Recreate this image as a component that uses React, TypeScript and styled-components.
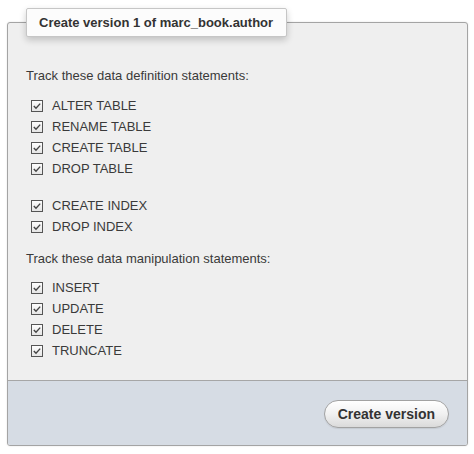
import React from 'react'
import styled, { createGlobalStyle } from 'styled-components'

const GlobalStyle = createGlobalStyle`
  html, body {
    margin: 0;
    padding: 0;
    background: #ffffff;
  }
  body {
    font-family: "Liberation Sans", Arial, sans-serif;
    font-size: 13px;
    color: #333;
  }
`

const Page = styled.div`
  width: 474px;
  height: 454px;
  padding: 8px 6px 0 7px;
  box-sizing: border-box;
`

const Panel = styled.fieldset`
  margin: 0;
  padding: 0;
  min-width: 0;
  border: 1px solid #a4a4a4;
  border-radius: 3px;
  background: #efefef;
  box-shadow: 0 0 2px rgba(0, 0, 0, 0.12);
`

const Legend = styled.legend`
  margin-left: 18px;
  padding: 6px 13px 6px 12px;
  line-height: 15px;
  font-weight: bold;
  font-size: 13px;
  color: #333;
  background: #fcfcfc;
  border: 1px solid #c6c6c6;
  border-radius: 2px;
  box-shadow: 0 3px 7px rgba(0, 0, 0, 0.2);
`

const Body = styled.div`
  padding: 31px 18px 19px;
`

const Heading = styled.div<{ $gap?: number }>`
  line-height: 15px;
  margin-top: ${({ $gap }) => $gap ?? 0}px;
  color: #3a3a3a;
`

const Group = styled.ul<{ $gap: number }>`
  list-style: none;
  margin: ${({ $gap }) => $gap}px 0 0;
  padding: 0 0 0 5px;
`

const Row = styled.li`
  display: flex;
  align-items: center;
  gap: 9px;
  height: 21px;
  line-height: 21px;
  color: #3a3a3a;
`

const Box = styled.span`
  display: inline-flex;
  align-items: center;
  justify-content: center;
  width: 12px;
  height: 12px;
  box-sizing: border-box;
  border: 1px solid #555;
  background: linear-gradient(#fdfdfd, #e6e6e6);
`

const Footer = styled.div`
  display: flex;
  justify-content: flex-end;
  padding: 19px 18px 17px;
  background: #d6dce4;
  border-top: 1px solid #a6a6a6;
  border-radius: 0 0 2px 2px;
`

const Button = styled.button`
  height: 28px;
  padding: 0 13px;
  border: 1px solid #a2a2a2;
  border-radius: 14px;
  background: linear-gradient(#ffffff 0%, #f1f1f1 50%, #dadada 100%);
  font-family: "Liberation Sans", Arial, sans-serif;
  font-size: 14px;
  font-weight: bold;
  color: #333;
  cursor: pointer;
  box-shadow: 0 1px 1px rgba(0, 0, 0, 0.08);
`

const Check = () => (
  <Box>
    <svg width="10" height="10" viewBox="0 0 10 10">
      <path d="M1.8 5 L4 7.3 L8.2 2.6" fill="none" stroke="#444" strokeWidth="1.4" />
    </svg>
  </Box>
)

const Option = ({ label }: { label: string }) => (
  <Row>
    <Check />
    <span>{label}</span>
  </Row>
)

const App = () => (
  <Page>
    <GlobalStyle />
    <Panel>
      <Legend>Create version 1 of marc_book.author</Legend>
      <Body>
        <Heading>Track these data definition statements:</Heading>
        <Group $gap={12}>
          {['ALTER TABLE', 'RENAME TABLE', 'CREATE TABLE', 'DROP TABLE'].map(l => (
            <Option key={l} label={l} />
          ))}
        </Group>
        <Group $gap={16}>
          {['CREATE INDEX', 'DROP INDEX'].map(l => (
            <Option key={l} label={l} />
          ))}
        </Group>
        <Heading $gap={14}>Track these data manipulation statements:</Heading>
        <Group $gap={11}>
          {['INSERT', 'UPDATE', 'DELETE', 'TRUNCATE'].map(l => (
            <Option key={l} label={l} />
          ))}
        </Group>
      </Body>
      <Footer>
        <Button>Create version</Button>
      </Footer>
    </Panel>
  </Page>
)

export default App
